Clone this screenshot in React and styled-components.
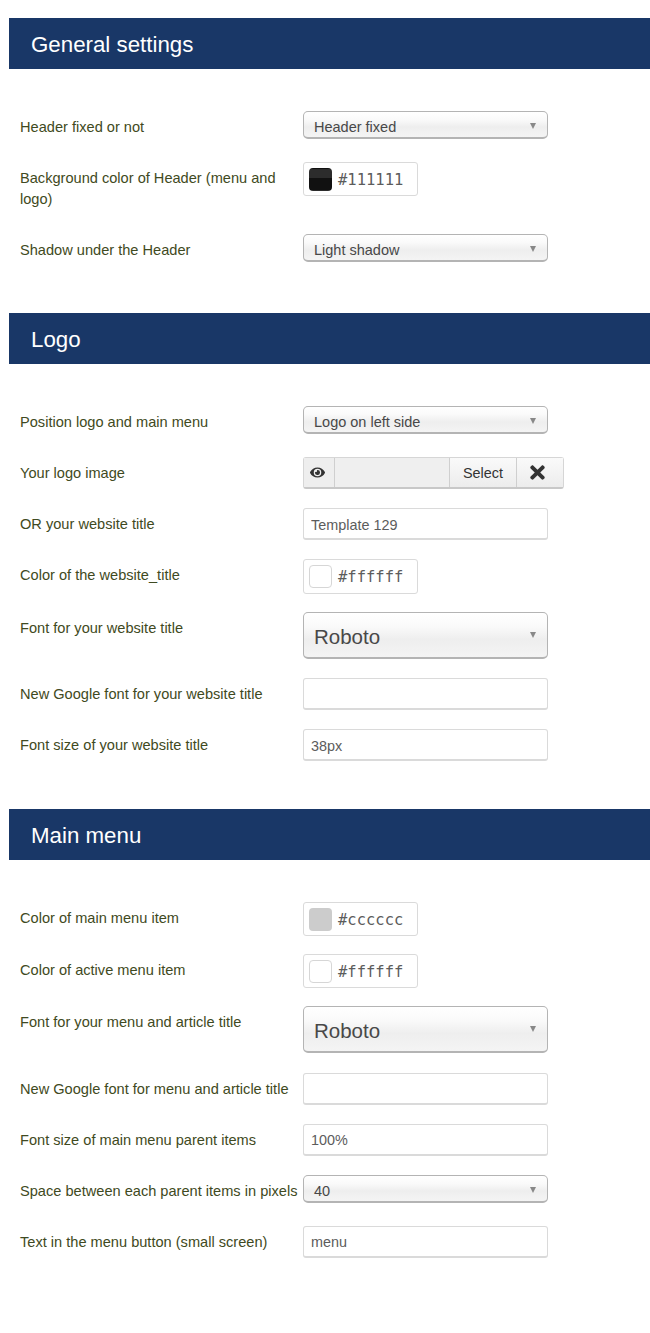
import React from "react";
import styled, { createGlobalStyle } from "styled-components";
import { FaEye, FaTimes } from "react-icons/fa";

const Global = createGlobalStyle`
  html, body { margin: 0; padding: 0; background: #fff; }
  body { font-family: "Liberation Sans", Arial, sans-serif; }
  * { box-sizing: border-box; }
`;

const Page = styled.div`
  width: 650px;
  min-height: 1333px;
  padding: 18px 0 0 9px;
  overflow: hidden;
`;

const Section = styled.section`
  margin-bottom: 46.75px;
`;

const Band = styled.h2`
  margin: 0 0 42px;
  height: 51px;
  padding-left: 22px;
  background: #193767;
  color: #fff;
  font-size: 22.3px;
  font-weight: 400;
  line-height: 53px;
`;

const Row = styled.div`
  display: flex;
  align-items: flex-start;
  margin: 0 0 18px 11px;
`;

const Label = styled.label`
  flex: 0 0 283px;
  width: 283px;
  padding: 6px 0 6.5px;
  color: #3f4a22;
  font-size: 14.6px;
  line-height: 20.5px;
  white-space: ${(p) => (p.$tight ? "nowrap" : "normal")};
`;

const SelectBox = styled.div`
  position: relative;
  width: 245px;
  height: ${(p) => (p.$big ? "47px" : "28px")};
  margin-bottom: ${(p) => (p.$big ? "1.5px" : "0")};
  padding-left: 10px;
  border: 1px solid #b4b4b4;
  border-bottom-width: 2px;
  border-radius: 5px;
  background: linear-gradient(#ffffff 0%, #fafafa 30%, #eeeeee 60%, #f4f4f4 100%);
  color: #484848;
  font-size: ${(p) => (p.$big ? "20.5px" : "14.5px")};
  line-height: ${(p) => (p.$big ? "47px" : "30px")};
`;

const Caret = styled.span`
  position: absolute;
  top: ${(p) => (p.$big ? "19px" : "11px")};
  right: 11px;
  width: 0;
  height: 0;
  border-left: 3.5px solid transparent;
  border-right: 3.5px solid transparent;
  border-top: 6px solid #888;
`;

const TextField = styled.input`
  display: block;
  width: 245px;
  height: 32px;
  padding: 2px 7px 0;
  border: 1px solid #dadada;
  border-width: 1px 1px 2px;
  border-radius: 3px;
  background: #fff;
  color: #5c5c5c;
  font-family: inherit;
  font-size: 14.4px;
  outline: none;
`;

const ColorField = styled.div`
  display: flex;
  align-items: center;
  gap: 6px;
  width: 115px;
  height: ${(p) => p.$h || "34px"};
  padding: 1px 0 0 5px;
  border: 1px solid #dadada;
  border-radius: 3px;
  background: #fff;
  color: #5c5c5c;
  font-family: "DejaVu Sans Mono", monospace;
  font-size: 15.5px;
`;

const Swatch = styled.span`
  flex: none;
  width: 23px;
  height: 23px;
  margin-top: -1px;
  border: 1px solid ${(p) => (p.$border ? "#d6d6d6" : "transparent")};
  border-radius: 4px;
  background: ${(p) => p.$color};
`;

const DarkSwatch = styled(Swatch)`
  background: linear-gradient(#2c2c2c 0 45%, #111111 45% 100%);
`;

const MediaGroup = styled.div`
  display: flex;
  width: 261px;
  height: 32px;
  border: 1px solid #d6d6d6;
  border-bottom: 2px solid #c8c8c8;
  border-radius: 3px;
  color: #333;
`;

const EyeAddon = styled.span`
  display: flex;
  align-items: center;
  justify-content: center;
  flex: 0 0 31px;
  padding-right: 4px;
  border-right: 1px solid #cfcfcf;
  background: #eeeeee;
  font-size: 15px;
`;

const PathBox = styled.span`
  flex: 1;
  background: #efefef;
`;

const GroupButton = styled.span`
  display: flex;
  align-items: center;
  justify-content: center;
  flex: 0 0 ${(p) => p.$w};
  padding: ${(p) => p.$pad || "1px 0 0"};
  border-left: 1px solid #cfcfcf;
  background: linear-gradient(#fafafa, #ececec);
  font-size: ${(p) => p.$fs || "14.4px"};
`;

function Select({ big, children }) {
  return (
    <SelectBox $big={big}>
      {children}
      <Caret $big={big} />
    </SelectBox>
  );
}

function Field({ label, tight, children }) {
  return (
    <Row>
      <Label $tight={tight}>{label}</Label>
      {children}
    </Row>
  );
}

export default function App() {
  return (
    <Page>
      <Global />
      <Section>
        <Band>General settings</Band>
        <Field label="Header fixed or not"><Select>Header fixed</Select></Field>
        <Field label="Background color of Header (menu and logo)">
          <ColorField><DarkSwatch />#111111</ColorField>
        </Field>
        <Field label="Shadow under the Header"><Select>Light shadow</Select></Field>
      </Section>
      <Section>
        <Band>Logo</Band>
        <Field label="Position logo and main menu"><Select>Logo on left side</Select></Field>
        <Field label="Your logo image">
          <MediaGroup>
            <EyeAddon><FaEye /></EyeAddon>
            <PathBox />
            <GroupButton $w="67px">Select</GroupButton>
            <GroupButton $w="47px" $fs="21px" $pad="0 5px 0 0"><FaTimes /></GroupButton>
          </MediaGroup>
        </Field>
        <Field label="OR your website title"><TextField readOnly value="Template 129" /></Field>
        <Field label="Color of the website_title">
          <ColorField $h="34.5px"><Swatch $color="#fff" $border />#ffffff</ColorField>
        </Field>
        <Field label="Font for your website title"><Select big>Roboto</Select></Field>
        <Field label="New Google font for your website title"><TextField readOnly value="" /></Field>
        <Field label="Font size of your website title"><TextField readOnly value="38px" /></Field>
      </Section>
      <Section>
        <Band>Main menu</Band>
        <Field label="Color of main menu item">
          <ColorField><Swatch $color="#cccccc" />#cccccc</ColorField>
        </Field>
        <Field label="Color of active menu item">
          <ColorField><Swatch $color="#fff" $border />#ffffff</ColorField>
        </Field>
        <Field label="Font for your menu and article title"><Select big>Roboto</Select></Field>
        <Field label="New Google font for menu and article title"><TextField readOnly value="" /></Field>
        <Field label="Font size of main menu parent items"><TextField readOnly value="100%" /></Field>
        <Field label="Space between each parent items in pixels" tight><Select>40</Select></Field>
        <Field label="Text in the menu button (small screen)"><TextField readOnly value="menu" /></Field>
      </Section>
    </Page>
  );
}
